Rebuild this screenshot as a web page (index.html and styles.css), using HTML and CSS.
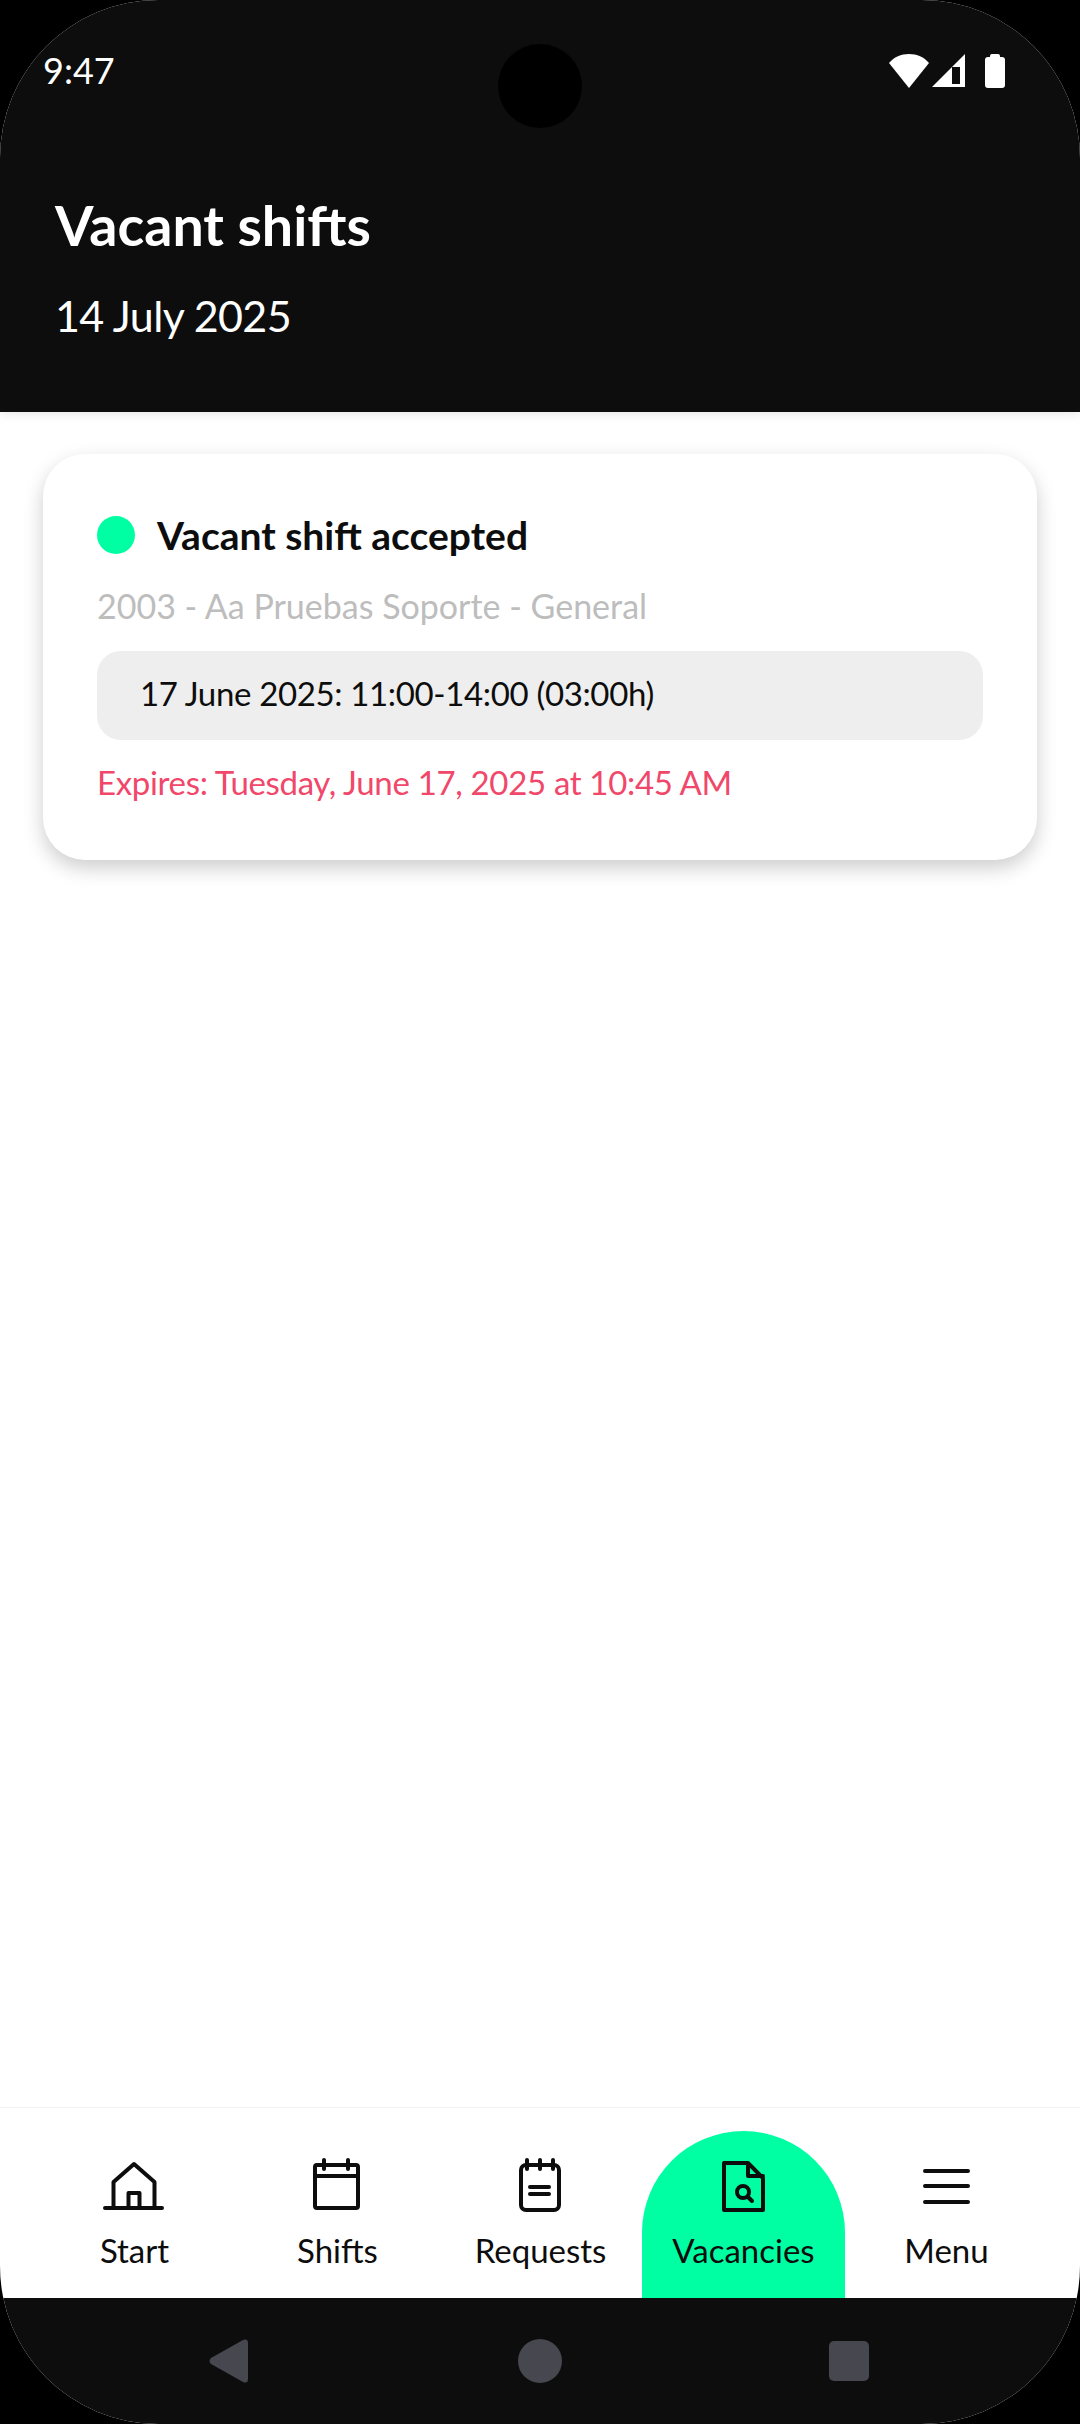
FILE: index.html
```html
<!DOCTYPE html>
<html lang="en">
<head>
<meta charset="UTF-8">
<meta name="viewport" content="width=device-width, initial-scale=1.0">
<title>Vacant shifts</title>
<link rel="stylesheet" href="styles.css">
</head>
<body>

<div class="pantalla">
  <div class="camara"></div>

  <header class="cabecera">
    <div class="estado">
      <span class="hora">9:47</span>
      <div class="estado-iconos">
        <svg width="40" height="34" viewBox="0 0 40 34"><path d="M0 9C5 3 12 0 20 0S35 3 40 9L20 34Z" fill="#fff"/></svg>
        <svg width="34" height="34" viewBox="0 0 34 34"><path fill-rule="evenodd" d="M33 0V33H0ZM20 13V30H28V13Z" fill="#fff"/></svg>
        <svg class="bateria" width="20" height="34" viewBox="0 0 20 34"><path d="M5 2Q5 0 7 0H13Q15 0 15 2V3H17Q20 3 20 6V31Q20 34 17 34H3Q0 34 0 31V6Q0 3 3 3H5Z" fill="#fff"/></svg>
      </div>
    </div>
    <h1 class="titulo">Vacant shifts</h1>
    <p class="fecha">14 July 2025</p>
  </header>

  <main class="contenido">
    <section class="tarjeta">
      <div class="tarjeta-titulo">
        <span class="punto"></span>
        <span>Vacant shift accepted</span>
      </div>
      <p class="centro">2003 - Aa Pruebas Soporte - General</p>
      <div class="horario">17 June 2025: 11:00-14:00 (03:00h)</div>
      <p class="expira">Expires: Tuesday, June 17, 2025 at 10:45 AM</p>
    </section>
  </main>

  <nav class="menu">
    <a class="menu-item">
      <svg class="icono" viewBox="1 0 64 56"><path d="M3 50H60M11.5 50V24L32 6L52.5 24V50M26.5 50V35H37.5V50"/></svg>
      <span>Start</span>
    </a>
    <a class="menu-item">
      <svg class="icono" viewBox="1 0 64 56"><rect x="10" y="7" width="43" height="43" rx="2"/><path d="M19 2V11M43 2V11M10 18H53"/></svg>
      <span>Shifts</span>
    </a>
    <a class="menu-item">
      <svg class="icono" viewBox="1 0 64 56"><rect x="13" y="7" width="38" height="45" rx="5"/><path d="M19 2V11M32 2V11M45 2V11M22 29H41M22 36H41"/></svg>
      <span>Requests</span>
    </a>
    <a class="menu-item activo">
      <svg class="icono" viewBox="1 0 64 56"><path d="M13 5H37L52 20V52H13ZM37 5V18H52"/><circle cx="32" cy="34" r="6"/><path d="M37 39L41 43"/></svg>
      <span>Vacancies</span>
    </a>
    <a class="menu-item">
      <svg class="icono" viewBox="1 0 64 56"><path d="M11 13H54M11 28H54M11 44H54"/></svg>
      <span>Menu</span>
    </a>
  </nav>

  <footer class="sistema">
    <svg width="40" height="44" viewBox="0 0 40 44"><path d="M35 1Q40 -1 40 4V40Q40 45 35 43L3 25Q0 22 3 19Z" fill="#46474f"/></svg>
    <span class="sistema-inicio"></span>
    <span class="sistema-recientes"></span>
  </footer>
</div>

</body>
</html>
```

FILE: styles.css
```css
body {
  margin: 0;
  padding: 0;
  background: #000;
  font-family: "Lato", "Noto Sans", sans-serif;
}

.pantalla {
  position: relative;
  width: 1080px;
  height: 2424px;
  background: #fff;
  border-radius: 158px;
  overflow: hidden;
  display: flex;
  flex-direction: column;
}

.camara {
  position: absolute;
  left: 498px;
  top: 44px;
  width: 84px;
  height: 84px;
  border-radius: 50%;
  background: #000;
}

.cabecera {
  height: 412px;
  box-sizing: border-box;
  padding: 50px 75px 0 43px;
  background: #0d0d0d;
  color: #fff;
  box-shadow: 0 2px 10px rgba(0, 0, 0, 0.1);
}

.estado {
  display: flex;
  justify-content: space-between;
  align-items: flex-start;
}

.hora {
  font-size: 36px;
  line-height: 40px;
}

.estado-iconos {
  display: flex;
  gap: 3px;
  margin-top: 4px;
}

.bateria {
  margin-left: 16px;
}

.titulo {
  margin: 104px 0 0 12px;
  font-size: 55.5px;
  font-weight: 700;
  line-height: 62px;
}

.fecha {
  margin: 35px 0 0 12px;
  font-size: 43px;
  letter-spacing: -0.6px;
  line-height: 50px;
}

.contenido {
  flex: 1;
  padding: 42px 43px 0;
}

.tarjeta {
  height: 406px;
  box-sizing: border-box;
  padding: 58px 54px 0;
  background: #fff;
  border-radius: 42px;
  box-shadow: 0 8px 20px rgba(0, 0, 0, 0.2);
}

.tarjeta-titulo {
  display: flex;
  align-items: center;
  gap: 22px;
  font-size: 39px;
  font-weight: 700;
  line-height: 46px;
  color: #0d0d0d;
}

.punto {
  width: 38px;
  height: 38px;
  border-radius: 50%;
  background: #00ffa3;
}

.centro {
  margin: 28px 0 0;
  font-size: 34px;
  line-height: 40px;
  color: #bdbdbd;
}

.horario {
  margin-top: 25px;
  padding: 0 43px;
  height: 89px;
  border-radius: 24px;
  background: #eee;
  font-size: 33px;
  letter-spacing: -0.35px;
  line-height: 85px;
  color: #0d0d0d;
}

.expira {
  margin: 22px 0 0;
  font-size: 33px;
  letter-spacing: -0.33px;
  line-height: 40px;
  color: #f0476a;
}

.menu {
  height: 191px;
  box-sizing: border-box;
  padding: 23px 32px 0 33px;
  border-top: 1px solid #f2f2f2;
  display: flex;
}

.menu-item {
  width: 203px;
  padding-top: 27px;
  display: flex;
  flex-direction: column;
  align-items: center;
  font-size: 33px;
  line-height: 38px;
  color: #0d0d0d;
}

.menu-item span {
  margin-top: 17px;
}

.icono {
  width: 64px;
  height: 56px;
  fill: none;
  stroke: #0d0d0d;
  stroke-width: 4;
  stroke-linecap: round;
  stroke-linejoin: round;
}

.activo {
  background: #00ffa3;
  border-radius: 102px 102px 0 0;
}

.sistema {
  height: 126px;
  padding: 41px 3px 0 0;
  box-sizing: border-box;
  background: #0d0d0d;
  display: flex;
  align-items: flex-start;
  justify-content: center;
}

.sistema svg {
  margin-right: 270px;
}

.sistema-inicio {
  width: 44px;
  height: 44px;
  border-radius: 50%;
  background: #46474f;
  margin-right: 267px;
}

.sistema-recientes {
  width: 40px;
  height: 40px;
  margin-top: 2px;
  border-radius: 5px;
  background: #46474f;
}
```
